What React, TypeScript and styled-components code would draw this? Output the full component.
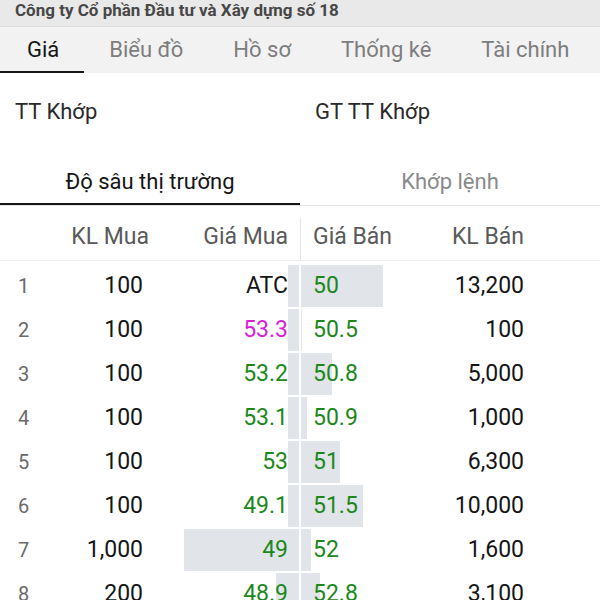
import styled, { createGlobalStyle } from "styled-components";

const GlobalStyle = createGlobalStyle`
  html, body {
    margin: 0;
    padding: 0;
    background: #ffffff;
    font-family: Roboto, "Noto Sans", "Liberation Sans", sans-serif;
  }
`;

const Screen = styled.div`
  width: 600px;
  height: 600px;
  overflow: hidden;
  display: flex;
  flex-direction: column;
  background: #ffffff;
`;

const TitleBar = styled.div`
  height: 26px;
  line-height: 20px;
  padding-left: 15px;
  background: #e9e9e9;
  border-bottom: 1px solid #dedede;
  color: #474747;
  font-size: 17px;
  font-weight: 700;
  white-space: nowrap;
`;

const TabBar = styled.div`
  display: flex;
  height: 46px;
  background: #f2f2f3;
  flex-shrink: 0;
`;

const Tab = styled.div<{ $active?: boolean }>`
  padding: 0 25px;
  height: 44px;
  line-height: 46px;
  font-size: 22px;
  white-space: nowrap;
  color: ${(p) => (p.$active ? "#151515" : "#7d7d7d")};
  border-bottom: 2px solid ${(p) => (p.$active ? "#151515" : "transparent")};

  &:first-child {
    padding-left: 27px;
  }
`;

const Content = styled.div`
  flex: 1;
  overflow: hidden;
  padding-top: 17px;
`;

const InfoRow = styled.div`
  display: grid;
  grid-template-columns: 1fr 1fr;
  height: 44px;
  line-height: 44px;
  font-size: 22px;
  color: #2a2a2a;
`;

const InfoCell = styled.div`
  padding-left: 15px;
  white-space: nowrap;
`;

const SubTabs = styled.div`
  display: grid;
  grid-template-columns: 1fr 1fr;
  margin-top: 27px;
  border-bottom: 1px solid #e4e4e4;
`;

const SubTab = styled.div<{ $active?: boolean }>`
  height: 42px;
  line-height: 42px;
  text-align: center;
  font-size: 22px;
  color: ${(p) => (p.$active ? "#151515" : "#8a8a8a")};
  border-bottom: 2px solid ${(p) => (p.$active ? "#151515" : "transparent")};
`;

const Cols = "60px 90px 150px 150px 150px";

const HeadRow = styled.div`
  display: grid;
  grid-template-columns: ${Cols};
  height: 47px;
  padding-top: 7px;
  line-height: 47px;
  font-size: 23px;
  color: #5a5a5a;
  border-bottom: 1px solid #ececec;
`;

const HeadCell = styled.div<{ $align?: "left" | "right"; $pad?: string; $divider?: boolean }>`
  position: relative;
  text-align: ${(p) => p.$align || "right"};
  padding: ${(p) => p.$pad || "0"};
  white-space: nowrap;

  &::before {
    content: "";
    display: ${(p) => (p.$divider ? "block" : "none")};
    position: absolute;
    left: 0;
    top: 5px;
    bottom: 0;
    width: 1px;
    background: #e6e6e6;
  }
`;

const Body = styled.div`
  padding-top: 3px;
`;

const Row = styled.div`
  display: grid;
  grid-template-columns: ${Cols};
  height: 44px;
  line-height: 44px;
  font-size: 23px;
  color: #151515;
`;

const Index = styled.div`
  padding-left: 18px;
  font-size: 20px;
  color: #6a6a6a;
`;

const Cell = styled.div<{ $align?: "left" | "right"; $pad?: string }>`
  position: relative;
  text-align: ${(p) => p.$align || "right"};
  padding: ${(p) => p.$pad || "0"};
  white-space: nowrap;
`;

const PriceText = styled.span<{ $tone: "green" | "pink" | "plain" }>`
  position: relative;
  color: ${(p) => (p.$tone === "green" ? "#1c881c" : p.$tone === "pink" ? "#d51fd5" : "#151515")};
`;

const Bar = styled.div<{ $side: "buy" | "sell" }>`
  position: absolute;
  top: 1px;
  bottom: 1px;
  ${(p) => (p.$side === "buy" ? "right: 1px;" : "left: 1px;")}
  background: #e1e5ea;
`;

type Level = {
  buyVol: string;
  buy: string;
  buyTone: "green" | "pink" | "plain";
  sell: string;
  sellVol: string;
};

const levels: Level[] = [
  { buyVol: "100", buy: "ATC", buyTone: "plain", sell: "50", sellVol: "13,200" },
  { buyVol: "100", buy: "53.3", buyTone: "pink", sell: "50.5", sellVol: "100" },
  { buyVol: "100", buy: "53.2", buyTone: "green", sell: "50.8", sellVol: "5,000" },
  { buyVol: "100", buy: "53.1", buyTone: "green", sell: "50.9", sellVol: "1,000" },
  { buyVol: "100", buy: "53", buyTone: "green", sell: "51", sellVol: "6,300" },
  { buyVol: "100", buy: "49.1", buyTone: "green", sell: "51.5", sellVol: "10,000" },
  { buyVol: "1,000", buy: "49", buyTone: "green", sell: "52", sellVol: "1,600" },
  { buyVol: "200", buy: "48.9", buyTone: "green", sell: "52.8", sellVol: "3,100" },
];

const num = (s: string) => Number(s.replace(/,/g, ""));

const tabs = ["Giá", "Biểu đồ", "Hồ sơ", "Thống kê", "Tài chính"];

export default function App() {
  return (
    <>
      <GlobalStyle />
      <Screen>
        <TitleBar>Công ty Cổ phần Đầu tư và Xây dựng số 18</TitleBar>
        <TabBar>
          {tabs.map((t, i) => (
            <Tab key={t} $active={i === 0}>
              {t}
            </Tab>
          ))}
        </TabBar>
        <Content>
          <InfoRow>
            <InfoCell>TT Khớp</InfoCell>
            <InfoCell>GT TT Khớp</InfoCell>
          </InfoRow>

          <SubTabs>
            <SubTab $active>Độ sâu thị trường</SubTab>
            <SubTab>Khớp lệnh</SubTab>
          </SubTabs>

          <HeadRow>
            <HeadCell />
            <HeadCell $pad="0 1px 0 0">KL Mua</HeadCell>
            <HeadCell $pad="0 12px 0 0">Giá Mua</HeadCell>
            <HeadCell $align="left" $pad="0 0 0 13px" $divider>
              Giá Bán
            </HeadCell>
            <HeadCell $pad="0 76px 0 0">KL Bán</HeadCell>
          </HeadRow>

          <Body>
            {levels.map((l, i) => (
              <Row key={i}>
                <Index>{i + 1}</Index>
                <Cell $pad="0 7px 0 0">{l.buyVol}</Cell>
                <Cell $pad="0 12px 0 0">
                  <Bar $side="buy" style={{ width: num(l.buyVol) * 0.115 }} />
                  <PriceText $tone={l.buyTone}>{l.buy}</PriceText>
                </Cell>
                <Cell $align="left" $pad="0 0 0 13px">
                  <Bar $side="sell" style={{ width: num(l.sellVol) * 0.0062 }} />
                  <PriceText $tone="green">{l.sell}</PriceText>
                </Cell>
                <Cell $pad="0 76px 0 0">{l.sellVol}</Cell>
              </Row>
            ))}
          </Body>
        </Content>
      </Screen>
    </>
  );
}
